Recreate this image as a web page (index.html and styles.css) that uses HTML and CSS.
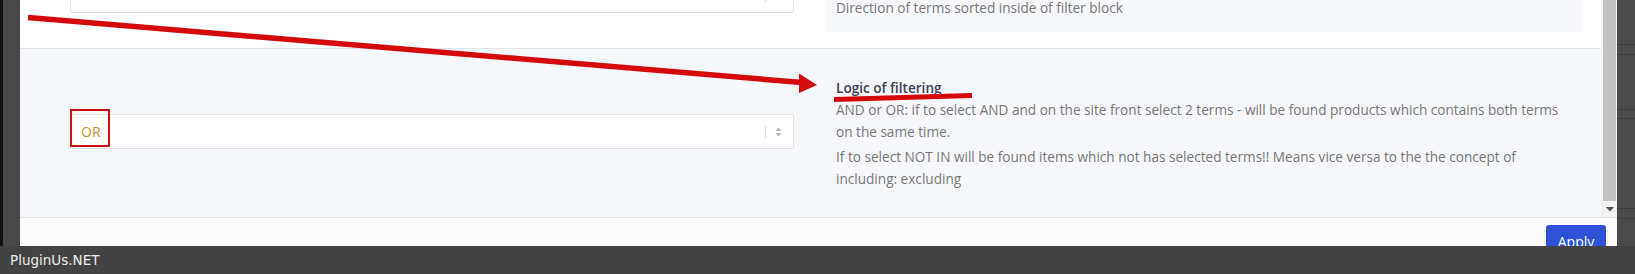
FILE: index.html
```html
<!DOCTYPE html>
<html lang="en">
<head>
    <meta charset="UTF-8">
    <title>Logic of filtering</title>
    <link rel="stylesheet" href="styles.css">
</head>
<body>
    <div class="screen">
        <div class="stage">
            <div class="backdrop-left"></div>

            <div class="modal">
                <div class="modal-scroll">
                    <div class="modal-content">
                        <!-- previous option, mostly scrolled out of view -->
                        <div class="option-row option-row-top">
                            <div class="option-field option-field-top">
                                <div class="fake-select">
                                    <span class="fake-select-value"></span>
                                    <span class="fake-select-arrows">
                                        <svg width="7" height="10" viewBox="0 0 7 10"><path d="M3.5 0.5 L6.5 4 H0.5 Z M3.5 9.5 L6.5 6 H0.5 Z" fill="#b4b6bb"/></svg>
                                    </span>
                                </div>
                            </div>
                            <div class="option-info option-info-box">
                                <p>Direction of terms sorted inside of filter block</p>
                            </div>
                        </div>

                        <!-- logic of filtering -->
                        <div class="option-row option-row-logic">
                            <div class="option-field option-field-logic">
                                <div class="fake-select">
                                    <span class="fake-select-value">OR</span>
                                    <span class="fake-select-arrows">
                                        <svg width="7" height="10" viewBox="0 0 7 10"><path d="M3.5 0.5 L6.5 4 H0.5 Z M3.5 9.5 L6.5 6 H0.5 Z" fill="#b4b6bb"/></svg>
                                    </span>
                                </div>
                            </div>
                            <div class="option-info">
                                <h4>Logic of filtering</h4>
                                <p>AND or OR: if to select AND and on the site front select 2 terms - will be found products which contains both terms on the same time.</p>
                                <p>If to select NOT IN will be found items which not has selected terms!! Means vice versa to the the concept of including: excluding</p>
                            </div>
                        </div>
                    </div>

                    <div class="scrollbar">
                        <div class="scrollbar-thumb"></div>
                        <div class="scrollbar-btn">
                            <svg width="8" height="5" viewBox="0 0 8 5"><path d="M0 0 H8 L4 4.5 Z" fill="#505050"/></svg>
                        </div>
                    </div>
                </div>

                <div class="modal-footer">
                    <button class="btn-apply">Apply</button>
                </div>
            </div>

            <div class="backdrop-right"></div>
        </div>

        <div class="taskbar">PluginUs.NET</div>
    </div>

    <!-- red marks drawn over the screenshot -->
    <svg class="annotations" width="1635" height="274" viewBox="0 0 1635 274">
        <line x1="28" y1="17.5" x2="802" y2="82.5" stroke="#d40a0a" stroke-width="5.5"/>
        <polygon points="799,73.5 817,85 799,93" fill="#d40a0a"/>
        <line x1="834" y1="99.5" x2="972" y2="95.5" stroke="#d40a0a" stroke-width="5"/>
        <rect x="71" y="110" width="38" height="36" fill="none" stroke="#d40a0a" stroke-width="2"/>
    </svg>
</body>
</html>
```

FILE: styles.css
```css
/* page */
body {
    margin: 0;
    width: 1635px;
    height: 274px;
    overflow: hidden;
    position: relative;
    background-color: #444;
    font-family: 'Open Sans', Arial, sans-serif;
}
.screen {
    display: flex;
    flex-direction: column;
    height: 274px;
}
.stage {
    display: flex;
    height: 246px;
}
.backdrop-left {
    width: 17px;
    background-color: #474747;
    border-left: 3px solid #101114;
}
.backdrop-right {
    flex: 1;
    background-color: #4b4b4b;
    background-image:
        linear-gradient(#3d3d3d, #3d3d3d),
        linear-gradient(#3d3d3d, #3d3d3d),
        linear-gradient(#3d3d3d, #3d3d3d),
        linear-gradient(#3d3d3d, #3d3d3d),
        linear-gradient(#3d3d3d, #3d3d3d),
        linear-gradient(#3d3d3d, #3d3d3d);
    background-size: 100% 1px;
    background-repeat: no-repeat;
    background-position: 0 44px, 0 54px, 0 109px, 0 118px, 0 208px, 0 218px;
}

/* modal */
.modal {
    width: 1597px;
    display: flex;
    flex-direction: column;
    background-color: #fff;
}
.modal-scroll {
    display: flex;
    height: 217px;
}
.modal-content {
    flex: 1;
    overflow: hidden;
}
.option-row {
    display: grid;
    grid-template-columns: 724px 1fr;
    column-gap: 32px;
    padding: 0 19px 0 50px;
}
.option-row-top {
    grid-template-rows: 48px;
    align-items: end;
    overflow: hidden;
    background-color: #fff;
    border-bottom: 1px solid #e3e4e8;
}
.option-row-logic {
    height: 168px;
    align-items: center;
    background-color: #f6f7fb;
}
.option-field-top {
    margin-bottom: 35px;
}
.option-field-logic {
    margin-bottom: 3px;
}

/* select look-alike */
.fake-select {
    display: flex;
    align-items: center;
    height: 35px;
    box-sizing: border-box;
    background-color: #fff;
    border: 1px solid #dfe1e7;
    border-radius: 2px;
    padding-left: 10px;
}
.fake-select-value {
    flex: 1;
    font-size: 14px;
    color: #c58f2d;
}
.fake-select-arrows {
    display: flex;
    align-items: center;
    height: 12px;
    padding: 0 11px 0 9px;
    border-left: 1px solid #dcdde1;
}
.fake-select-arrows svg {
    display: block;
}

/* description column */
.option-info {
    padding: 0 10px;
    color: #777;
    font-size: 13.6px;
}
.option-info-box {
    margin-bottom: 16px;
    padding: 10px 10px 13px;
    background-color: #f6f7fb;
    border-radius: 4px;
}
.option-info h4 {
    margin: 0;
    font-size: 13.6px;
    line-height: 22px;
    font-weight: 600;
    color: #3a3f50;
}
.option-info p {
    margin: 0 0 3px;
    line-height: 22px;
}
.option-info p:last-child {
    margin-bottom: 0;
}

/* scrollbar */
.scrollbar {
    width: 16px;
    display: flex;
    flex-direction: column;
    background-color: #f1f1f1;
}
.scrollbar-thumb {
    height: 201px;
    margin: 0 1px 0 2px;
    background-color: #c1c1c1;
}
.scrollbar-btn {
    flex: 1;
    display: flex;
    align-items: center;
    justify-content: center;
    padding-left: 1px;
}
.scrollbar-btn svg {
    display: block;
}

/* footer */
.modal-footer {
    flex: 1;
    display: flex;
    justify-content: flex-end;
    align-items: flex-start;
    padding: 7px 11px 0 0;
    overflow: hidden;
    background-color: #fbfbfb;
    border-top: 1px solid #e2e3e6;
}
.btn-apply {
    width: 60px;
    height: 32px;
    padding: 0;
    border: none;
    border-radius: 3px;
    background-color: #2c52d6;
    color: #fff;
    font-family: 'Open Sans', Arial, sans-serif;
    font-size: 14px;
}

/* bottom bar */
.taskbar {
    height: 28px;
    line-height: 28px;
    padding-left: 10px;
    background-color: #434343;
    color: #ececec;
    font-family: 'DejaVu Sans', sans-serif;
    font-size: 13.5px;
}

/* red marks */
.annotations {
    position: absolute;
    left: 0;
    top: 0;
    pointer-events: none;
}
```
